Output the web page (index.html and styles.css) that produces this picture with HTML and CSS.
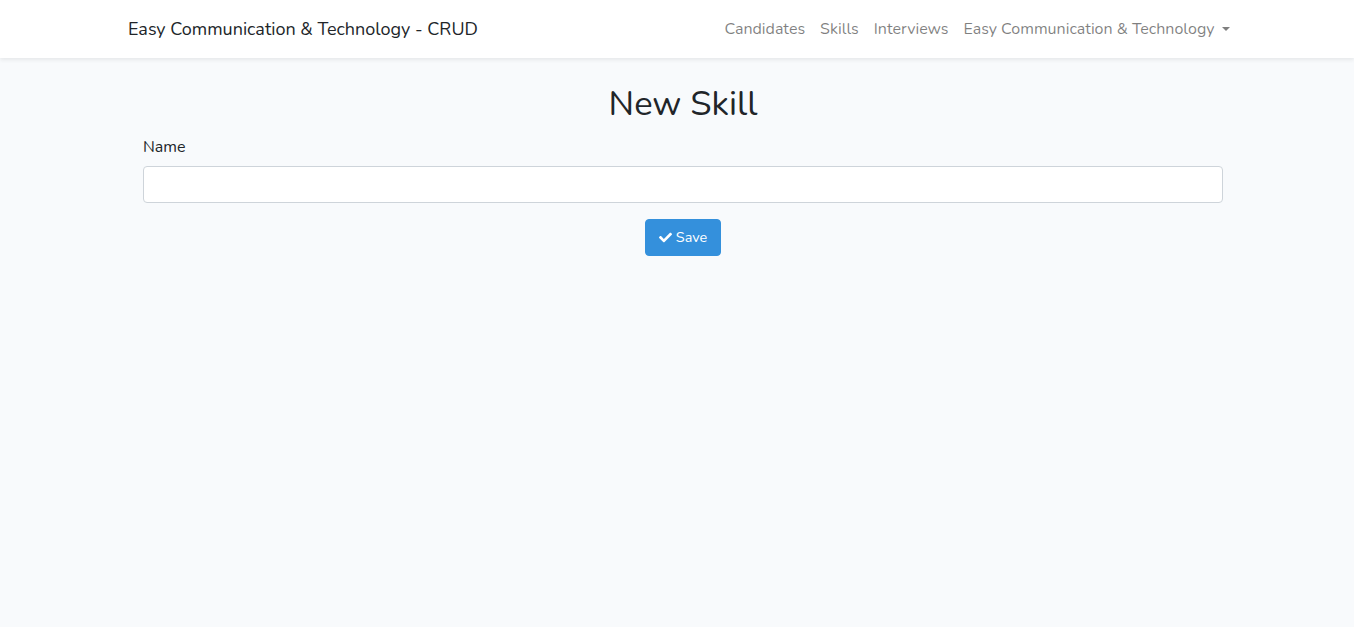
FILE: index.html
```html
<!DOCTYPE html>
<html lang="en">
<head>
<meta charset="utf-8">
<title>New Skill</title>
<link rel="stylesheet" href="styles.css">
</head>
<body>
<nav class="navbar">
  <div class="nav-inner">
    <a class="brand" href="#">Easy Communication &amp; Technology - CRUD</a>
    <ul class="nav-links">
      <li><a href="#">Candidates</a></li>
      <li><a href="#">Skills</a></li>
      <li><a href="#">Interviews</a></li>
      <li><a href="#" class="dropdown">Easy Communication &amp; Technology<span class="caret"></span></a></li>
    </ul>
  </div>
</nav>
<main class="main">
  <div class="content">
    <h1 class="title">New Skill</h1>
    <form class="form">
      <div class="form-group">
        <label class="label" for="name">Name</label>
        <input class="input" id="name" type="text">
      </div>
      <div class="actions">
        <button type="button" class="btn">
          <svg class="check" viewBox="0 0 512 512" width="13" height="13"><path fill="currentColor" d="M173.898 439.404l-166.4-166.4c-9.997-9.997-9.997-26.206 0-36.204l36.203-36.204c9.997-9.998 26.207-9.998 36.204 0L192 312.69 432.095 72.596c9.997-9.997 26.207-9.997 36.204 0l36.203 36.204c9.997 9.997 9.997 26.206 0 36.204l-294.4 294.401c-9.998 9.997-26.207 9.997-36.204-.001z"/></svg>
          Save
        </button>
      </div>
    </form>
  </div>
</main>
</body>
</html>
```
FILE: styles.css
```css
* { box-sizing: border-box; }
html, body { margin: 0; padding: 0; }
body {
  font-family: "Nunito", "Lato", "Noto Sans", sans-serif;
  font-size: 16px;
  line-height: 1.6;
  color: #212529;
  background: #f8fafc;
  min-height: 627px;
}
.navbar {
  background: #fff;
  box-shadow: 0 2px 4px rgba(0,0,0,.075);
  padding: 8px 16px;
}
.nav-inner {
  max-width: 1140px;
  margin: 0 auto;
  padding: 0 10px 0 21px;
  display: flex;
  align-items: center;
  justify-content: space-between;
  height: 42px;
}
.brand {
  font-size: 18px;
  color: #212529;
  text-decoration: none;
}
.nav-links {
  list-style: none;
  margin: 2px 0 0;
  padding: 0;
  display: flex;
}
.nav-links a {
  display: block;
  padding: 8px 7.5px;
  color: rgba(0,0,0,.5);
  text-decoration: none;
}
.caret {
  display: inline-block;
  margin-left: 7px;
  vertical-align: 3px;
  border-top: 4.3px solid;
  border-left: 4.3px solid transparent;
  border-right: 4.3px solid transparent;
}
.main { padding: 24px 0; }
.content {
  max-width: 1140px;
  margin: 0 auto;
  padding: 0 24px 0 36px;
}
.title {
  font-size: 34.6px;
  font-weight: 400;
  line-height: 1.25;
  text-align: center;
  margin: 0 0 10px;
}
.form-group { margin-bottom: 16px; }
.label {
  display: block;
  margin-bottom: 5px;
}
.input {
  display: block;
  width: 100%;
  height: 37px;
  padding: 6px 12px;
  font: inherit;
  color: #495057;
  background: #fff;
  border: 1px solid #ced4da;
  border-radius: 4px;
}
.actions { text-align: center; }
.btn {
  display: inline-flex;
  align-items: center;
  gap: 4px;
  height: 37px;
  padding: 6px 13px;
  font-family: inherit;
  font-size: 14.4px;
  color: #fff;
  background: #3490dc;
  border: 1px solid #3490dc;
  border-radius: 4px;
}
.check { display: block; }
```
